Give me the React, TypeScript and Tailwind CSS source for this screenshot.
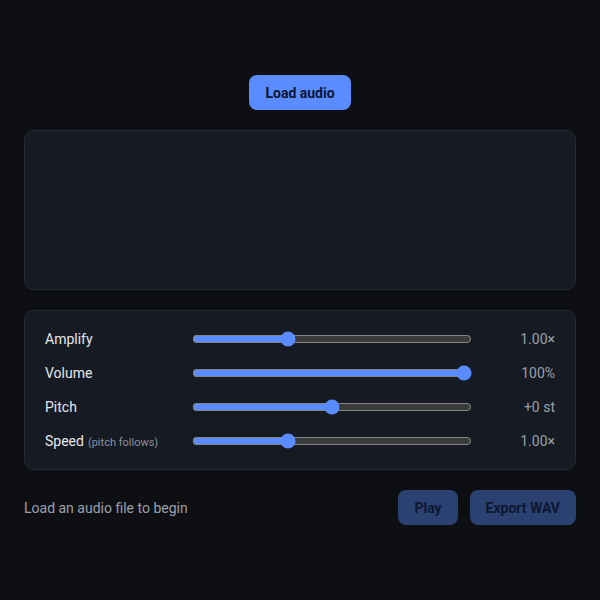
import { useState } from 'react';

type Ctl = { key: string; label: string; hint?: string; min: number; max: number; step: number; fmt: (v: number) => string };

const CONTROLS: Ctl[] = [
  { key: 'amp', label: 'Amplify', min: 0, max: 3, step: 0.01, fmt: v => `${v.toFixed(2)}×` },
  { key: 'vol', label: 'Volume', min: 0, max: 100, step: 1, fmt: v => `${v}%` },
  { key: 'pitch', label: 'Pitch', min: -12, max: 12, step: 1, fmt: v => `${v >= 0 ? '+' : ''}${v} st` },
  { key: 'speed', label: 'Speed', hint: '(pitch follows)', min: 0, max: 3, step: 0.01, fmt: v => `${v.toFixed(2)}×` },
];

export default function App() {
  const [vals, setVals] = useState<Record<string, number>>({ amp: 1, vol: 100, pitch: 0, speed: 1 });

  return (
    <div className="min-h-screen bg-[#0e0f13] flex flex-col justify-center px-6 gap-5 font-['Roboto',sans-serif] text-[#e6e8ec] [color-scheme:dark]">
      {/* Load */}
      <div className="flex justify-center">
        <button className="h-[35px] px-4 rounded-[8px] bg-[#5b8cff] text-[#0b1530] text-sm font-bold">
          Load audio
        </button>
      </div>

      {/* Waveform */}
      <div className="h-[160px] rounded-[10px] border border-[#262a33] bg-[#161a22]" />

      {/* Controls */}
      <div className="rounded-[10px] border border-[#262a33] bg-[#161a22] px-5 py-4 flex flex-col gap-[10px]">
        {CONTROLS.map(c => (
          <div key={c.key} className="grid grid-cols-[147px_280px_1fr] items-center h-6">
            <span className="text-sm">
              {c.label}
              {c.hint && <span className="text-[11px] text-[#8b919c] ml-1">{c.hint}</span>}
            </span>
            <input
              type="range"
              min={c.min}
              max={c.max}
              step={c.step}
              value={vals[c.key]}
              onChange={e => setVals(v => ({ ...v, [c.key]: Number(e.target.value) }))}
              className="w-full m-0 accent-[#5b8cff]"
            />
            <span className="text-sm text-[#9aa0aa] text-right">{c.fmt(vals[c.key])}</span>
          </div>
        ))}
      </div>

      {/* Footer */}
      <div className="flex items-center justify-between">
        <span className="text-sm text-[#9aa0aa]">Load an audio file to begin</span>
        <div className="flex gap-3">
          <button disabled className="h-[35px] px-4 rounded-[8px] bg-[#2a4172] text-[#0d1830] text-sm font-bold">
            Play
          </button>
          <button disabled className="h-[35px] px-4 rounded-[8px] bg-[#2a4172] text-[#0d1830] text-sm font-bold">
            Export WAV
          </button>
        </div>
      </div>
    </div>
  );
}
